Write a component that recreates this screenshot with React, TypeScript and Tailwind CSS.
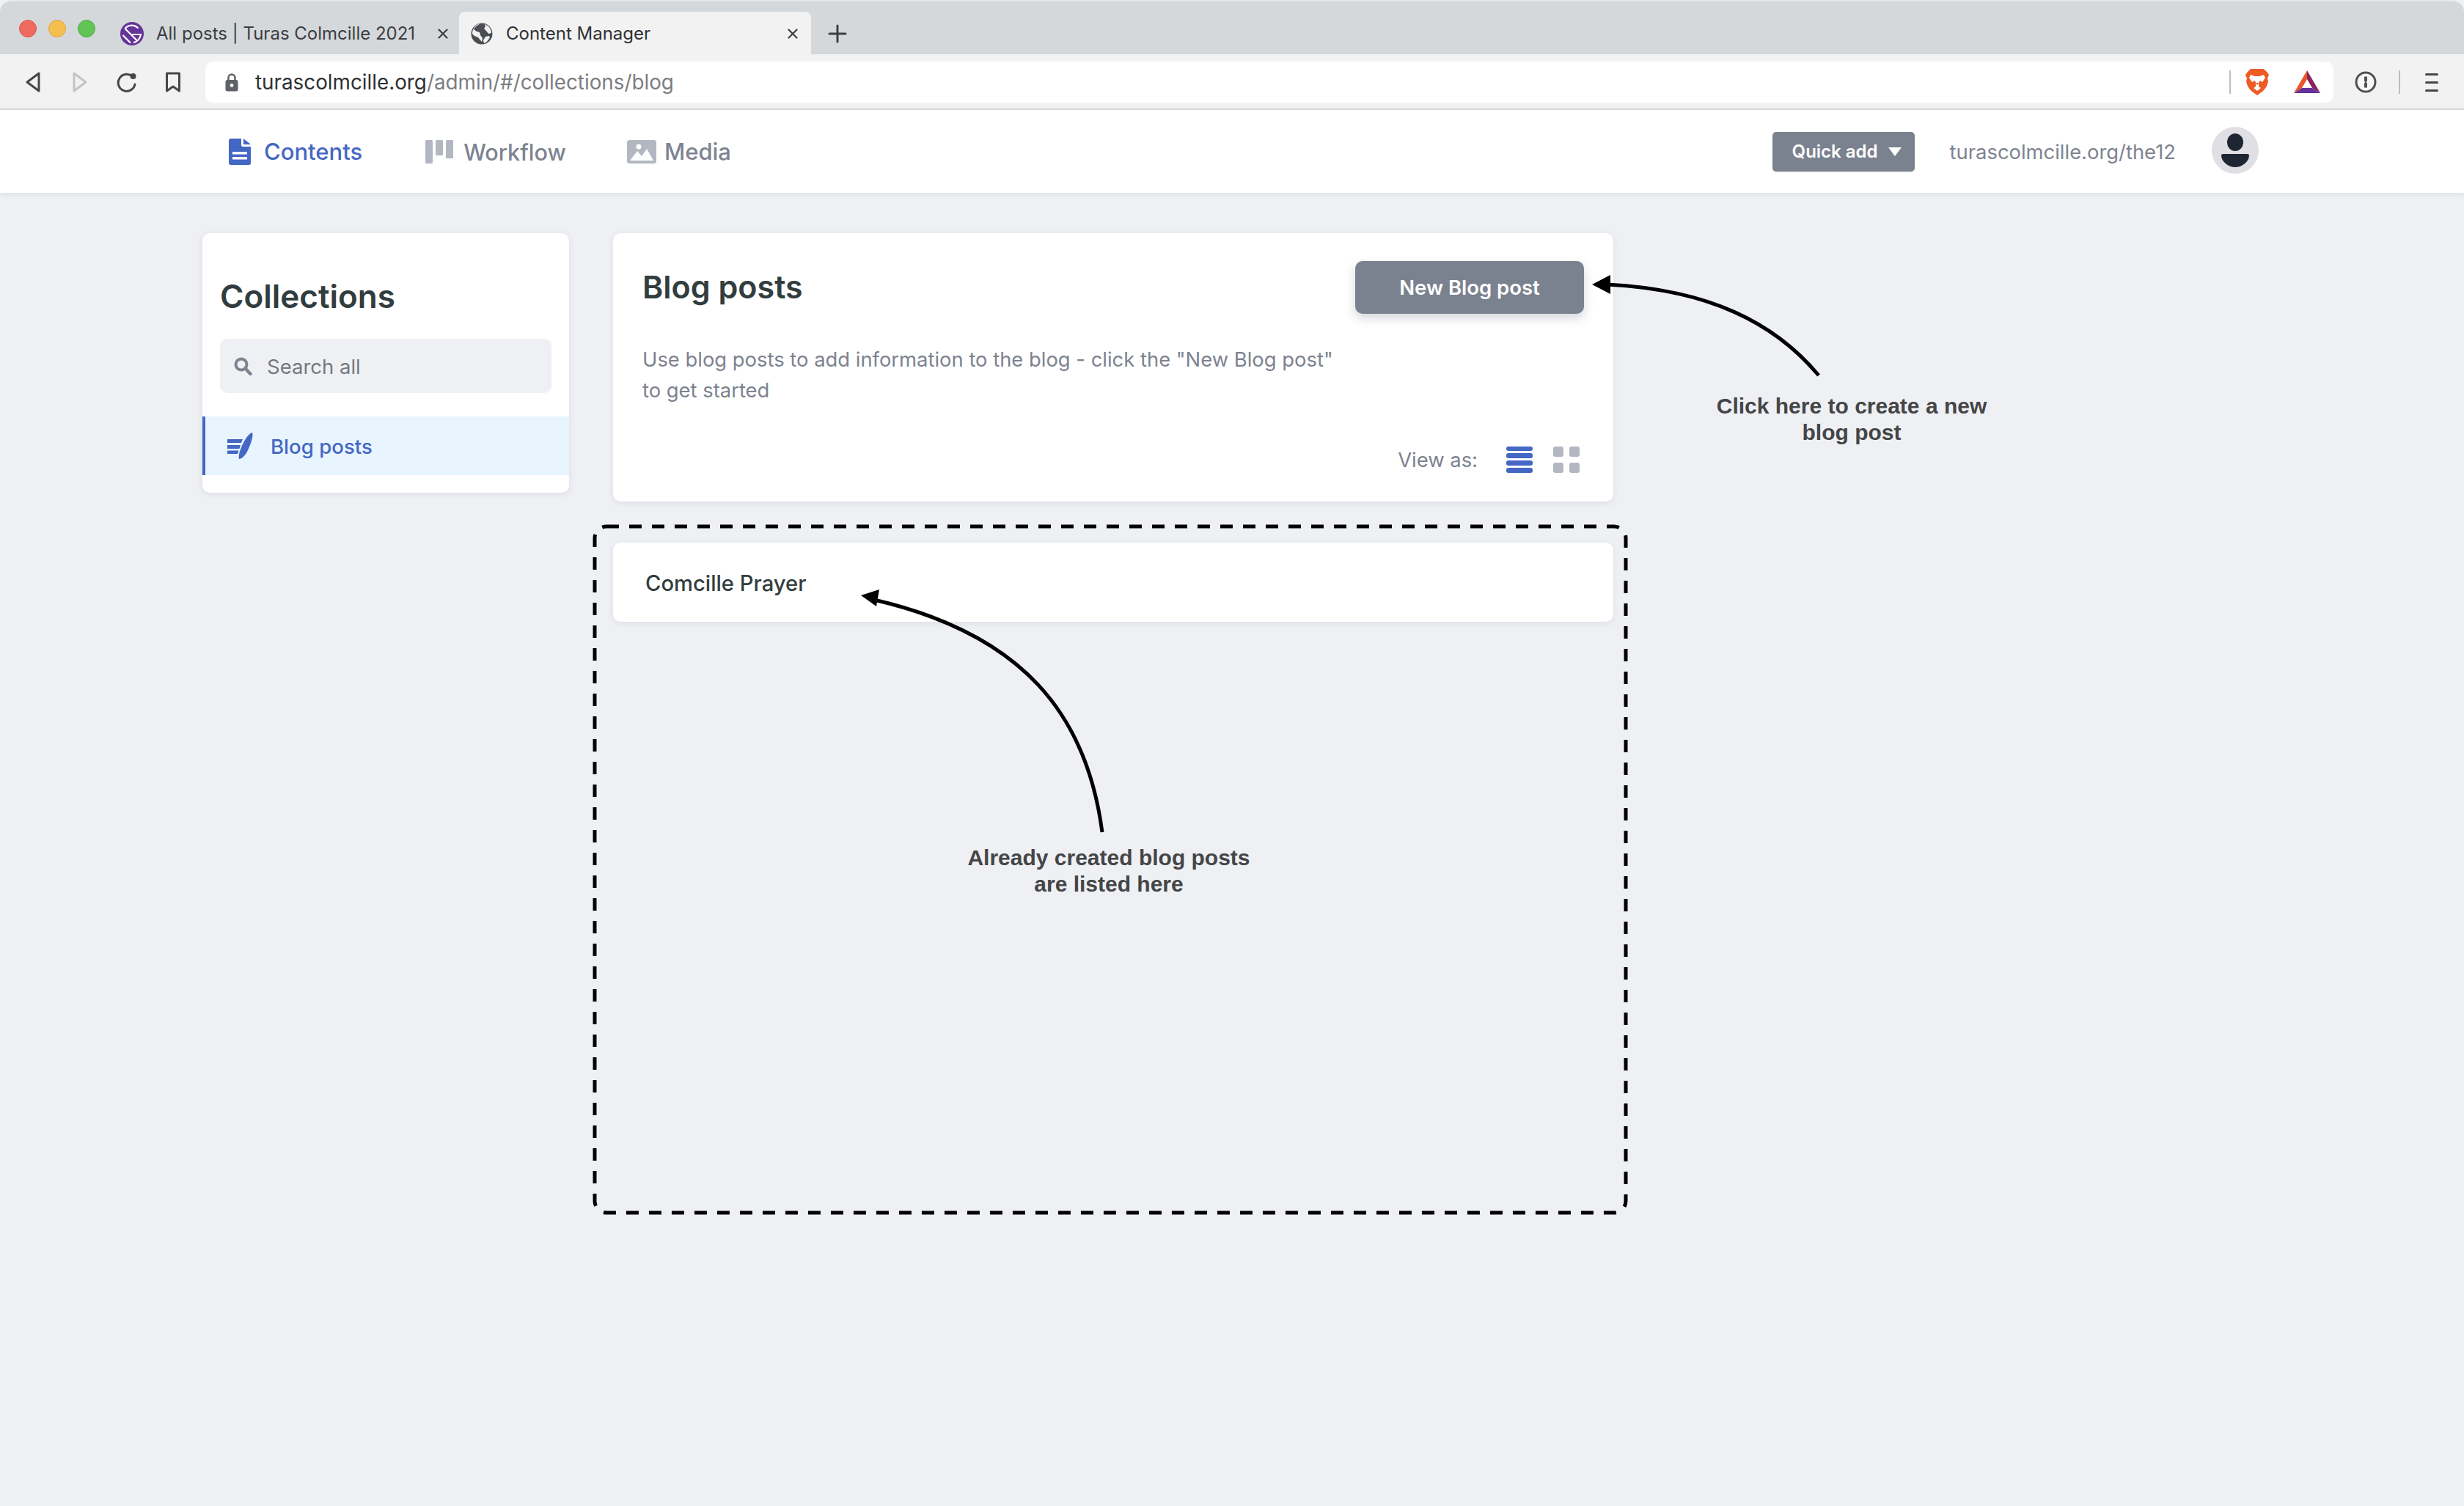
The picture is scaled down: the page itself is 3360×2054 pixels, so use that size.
import React from "react";

const Lights = () => (
  <div className="flex gap-[16px] mt-[25px] ml-[26px] w-[138px] shrink-0">
    <span className="w-[24px] h-[24px] rounded-full bg-[#ee6a5f] border border-[#d8564c]" />
    <span className="w-[24px] h-[24px] rounded-full bg-[#f5bf4f] border border-[#dca53c]" />
    <span className="w-[24px] h-[24px] rounded-full bg-[#61c454] border border-[#50ad44]" />
  </div>
);

const GatsbyIcon = () => (
  <svg width="32" height="32" viewBox="0 0 32 32" className="shrink-0">
    <circle cx="16" cy="16" r="16" fill="#663399" />
    <path d="M3.500 18 L14 28.500 M6.500 9 L23 25.500" stroke="#fff" strokeWidth="2.200" fill="none" />
    <path d="M6.500 9 C11 3.500 19 3 24.500 8.500 M16 17 H28 C27.500 22.500 23 27 18 28" stroke="#fff" strokeWidth="2.200" fill="none" />
  </svg>
);

const GlobeIcon = () => (
  <svg width="30" height="30" viewBox="0 0 30 30" className="shrink-0">
    <circle cx="15" cy="15" r="14.500" fill="#4a4d52" />
    <path d="M13 1 C9 4 5 6 4 9 L8 12 L12 13 L13 17 L16 21 L15 26 L10 20 L5 18 L2 15 C2 8 7 2 13 1Z M19 2 C24 4 28 8 28 14 L24 15 L21 11 L18 8 L20 5Z M20 19 L25 18 L26 20 C24 24 21 27 18 28 L17 24Z" fill="#f2f2f2" />
  </svg>
);

const CloseX = ({ className }: { className: string }) => (
  <svg width="14" height="14" viewBox="0 0 14 14" className={className}>
    <path d="M1.500 1.500 L12.500 12.500 M12.500 1.500 L1.500 12.500" stroke="#3c3f43" strokeWidth="2.200" strokeLinecap="round" />
  </svg>
);

const TabBar = () => (
  <div className="h-[74px] bg-[#d5d8db] rounded-t-[16px] border-t-2 border-[#e4e6e8] flex shrink-0 items-start">
    <Lights />
    <div className="flex items-center h-[56px] mt-[16px] w-[462px] shrink-0">
      <GatsbyIcon />
      <span className="ml-[17px] text-[24px] text-[#3b3d41] whitespace-nowrap">All posts | Turas Colmcille 2021</span>
      <CloseX className="ml-[31px] shrink-0" />
    </div>
    <div className="w-[480px] h-[58px] mt-[14px] bg-[#f2f2f2] rounded-t-[8px] flex items-center pl-[16px] pt-[2px] shrink-0 relative">
      <GlobeIcon />
      <span className="ml-[18px] text-[24px] text-[#2f3134] whitespace-nowrap">Content Manager</span>
      <CloseX className="absolute left-[448px] top-[23px]" />
    </div>
    <svg width="26" height="26" viewBox="0 0 26 26" className="ml-[23px] mt-[31px]">
      <path d="M13 2 V24 M2 13 H24" stroke="#3c3f43" strokeWidth="3" strokeLinecap="round" />
    </svg>
  </div>
);

const ToolIcons = () => (
  <div className="flex items-center w-[280px] shrink-0">
    <svg width="20" height="28" viewBox="0 0 20 28" className="ml-[35px]">
      <path d="M18 2 V26 L2 14 Z" fill="none" stroke="#44474b" strokeWidth="3" strokeLinejoin="round" />
    </svg>
    <svg width="20" height="28" viewBox="0 0 20 28" className="ml-[44px]">
      <path d="M2 2 V26 L18 14 Z" fill="none" stroke="#c4c4c4" strokeWidth="3" strokeLinejoin="round" />
    </svg>
    <svg width="28" height="28" viewBox="0 0 28 28" className="ml-[40px]">
      <path d="M21 6 A 11.500 11.500 0 1 0 25 17" fill="none" stroke="#44474b" strokeWidth="3" strokeLinecap="round" />
      <circle cx="22.500" cy="6" r="4" fill="#44474b" />
    </svg>
    <svg width="22" height="28" viewBox="0 0 22 28" className="ml-[38px]">
      <path d="M2.500 2 H19.500 V26 L11 20 L2.500 26 Z" fill="none" stroke="#44474b" strokeWidth="3" strokeLinejoin="round" />
    </svg>
  </div>
);

const BraveIcon = () => (
  <svg width="32" height="37" viewBox="0 0 32 37" className="ml-[20px] shrink-0">
    <path d="M7 0 H25 L29 4 L32 8 L30 13 L31 17 C30 22 28 26 24 30 L16 36 L8 30 C4 26 2 22 1 17 L2 13 L0 8 L3 4 Z" fill="#ef5b25" />
    <path d="M7 8 L13 10 H19 L25 8 L27 12 L23 18 L20 16 L18 18 V24 L21 26 L16 30 L11 26 L14 24 V18 L12 16 L9 18 L5 12 Z" fill="#fff" />
    <path d="M14 19 H18 L16 22 Z" fill="#ef5b25" />
  </svg>
);

const BatIcon = () => (
  <svg width="36" height="32" viewBox="0 0 36 32" className="ml-[34px] shrink-0">
    <path d="M18 0 L0 31 L11 24 L18 12 Z" fill="#e9572b" />
    <path d="M18 0 V12 L25 24 L36 31 Z" fill="#8a2460" />
    <path d="M0 31 H36 L25 24 H11 Z" fill="#66309a" />
  </svg>
);

const OnePassword = () => (
  <svg width="30" height="30" viewBox="0 0 30 30" className="ml-[29px] shrink-0">
    <circle cx="15" cy="15" r="13" fill="#f7f7f7" stroke="#4e5053" strokeWidth="3" />
    <path d="M13 7.500 H17 V13.500 L15.600 15 L17 16.500 V22.500 H13 V16.500 L14.400 15 L13 13.500 Z" fill="#4e5053" />
  </svg>
);

const Toolbar = () => (
  <div className="h-[76px] bg-[#f2f2f2] border-b-2 border-[#d9d9d9] flex items-start pt-[10px] shrink-0">
    <div className="h-[56px] flex items-center"><ToolIcons /></div>
    <div className="h-[56px] w-[2902px] bg-white rounded-[10px] flex items-center shrink-0">
      <svg width="18" height="26" viewBox="0 0 18 26" className="ml-[27px] shrink-0">
        <path d="M4.500 11 V7 A4.500 4.500 0 0 1 13.500 7 V11" fill="none" stroke="#5e6165" strokeWidth="2.500" />
        <rect x="0.500" y="10" width="17" height="15.500" rx="2.500" fill="#5e6165" />
        <circle cx="9" cy="17.500" r="2.400" fill="#fff" />
      </svg>
      <span className="ml-[23px] pt-[2px] text-[27.8px] text-[#2f3134] whitespace-nowrap">
        turascolmcille.org<span className="text-[#7b7e83]">/admin/#/collections/blog</span>
      </span>
      <div className="ml-auto w-[2px] h-[32px] bg-[#bdbdbd] shrink-0" />
      <BraveIcon />
      <BatIcon />
      <div className="w-[18px] shrink-0" />
    </div>
    <div className="h-[56px] flex items-center">
      <OnePassword />
      <div className="ml-[30px] w-[2px] h-[32px] bg-[#bdbdbd]" />
      <div className="ml-[34px] w-[18px] flex flex-col gap-[8px]">
        <span className="h-[3px] rounded-full bg-[#44474b]" />
        <span className="h-[3px] rounded-full bg-[#44474b]" />
        <span className="h-[3px] rounded-full bg-[#44474b]" />
      </div>
    </div>
  </div>
);

const NavBar = () => (
  <div className="h-[113px] bg-white shadow-[0_2px_6px_rgba(60,70,90,0.10)] flex items-center pl-[312px] shrink-0 relative">
    <svg width="30" height="36" viewBox="0 0 30 36" className="shrink-0">
      <path d="M3 0 H17 V9 A2 2 0 0 0 19 11 H30 V33 A3 3 0 0 1 27 36 H3 A3 3 0 0 1 0 33 V3 A3 3 0 0 1 3 0Z" fill="#4467c4" />
      <path d="M20 0 L30 8 H20 Z" fill="#4467c4" />
      <rect x="5" y="18" width="20" height="3.500" fill="#fff" />
      <rect x="5" y="25" width="20" height="3.500" fill="#fff" />
    </svg>
    <span className="ml-[18px] pt-[2px] text-[31px] font-medium text-[#4467c4]">Contents</span>
    <svg width="38" height="32" viewBox="0 0 38 32" className="ml-[86px] shrink-0">
      <rect x="0" y="0" width="10" height="32" rx="1.500" fill="#b3b7c2" />
      <rect x="14" y="0" width="10" height="21" rx="1.500" fill="#b3b7c2" />
      <rect x="28" y="0" width="10" height="25" rx="1.500" fill="#b3b7c2" />
    </svg>
    <span className="ml-[14px] pt-[2px] text-[30.6px] font-medium text-[#7e8390]">Workflow</span>
    <svg width="40" height="32" viewBox="0 0 40 32" className="ml-[83px] shrink-0">
      <rect x="0" y="0" width="40" height="32" rx="3.500" fill="#b3b7c2" />
      <circle cx="16" cy="9" r="3.500" fill="#fff" />
      <path d="M4 28 L14 15 L20 22 L27 12 L36 28 Z" fill="#fff" />
    </svg>
    <span className="ml-[11px] pt-[2px] text-[31px] font-medium text-[#7e8390]">Media</span>
    <div className="ml-auto flex items-center mr-[280px]">
      <div className="h-[54px] w-[194px] bg-[#7b828f] rounded-[5px] flex items-center pl-[27px] shadow-[0_1px_2px_rgba(0,0,0,0.08)]">
        <span className="text-[24px] font-semibold text-white whitespace-nowrap">Quick add</span>
        <svg width="18" height="12" viewBox="0 0 18 12" className="ml-[14px]">
          <path d="M0 0 H18 L9 12 Z" fill="#fff" />
        </svg>
      </div>
      <span className="ml-[48px] pt-[3px] text-[27.4px] text-[#7e8390] whitespace-nowrap">turascolmcille.org/the12</span>
      <div className="ml-[49px] -mt-[4px] w-[64px] h-[64px] rounded-full bg-[#dfdfe4] flex items-center justify-center">
        <svg width="40" height="46" viewBox="0 0 40 46">
          <ellipse cx="20" cy="12" rx="11" ry="12" fill="#1f2633" />
          <path d="M1 30 C1 28 3 28 6 28 H34 C37 28 39 28 39 30 C39 38 30 46 20 46 C10 46 1 38 1 30Z" fill="#1f2633" />
        </svg>
      </div>
    </div>
  </div>
);

const Sidebar = () => (
  <div className="w-[500px] h-[354px] bg-white rounded-[10px] shadow-[0_2px_8px_rgba(60,70,90,0.10)] shrink-0 overflow-hidden">
    <h2 className="ml-[24px] mt-[56px] text-[44px] leading-[60px] font-semibold text-[#313d3e]">Collections</h2>
    <div className="mx-[24px] mt-[28px] h-[74px] rounded-[10px] bg-[#eff0f4] flex items-center pl-[18px]">
      <svg width="26" height="26" viewBox="0 0 26 26" className="shrink-0">
        <circle cx="11" cy="11" r="7.500" fill="none" stroke="#7e8390" strokeWidth="4" />
        <path d="M16.500 16.500 L23.500 24" stroke="#7e8390" strokeWidth="4.500" strokeLinecap="round" />
      </svg>
      <span className="ml-[20px] pt-[3px] text-[27.5px] text-[#75797f]">Search all</span>
    </div>
    <div className="mt-[32px] h-[80px] bg-[#e8f4fe] border-l-4 border-[#4467c4] flex items-center pl-[30px]">
      <svg width="36" height="36" viewBox="0 0 36 36" className="shrink-0">
        <path d="M0 9 H21 L19 14 H0Z M0 17 H18 L16.500 22 H0Z M0 24.500 H15.500 L14 29 H0Z" fill="#4467c4" />
        <path d="M34 0 C36 4 32 16 27 26 C24 32 19 36 16 36 C14 30 20 16 26 7 C29 3 32 0 34 0Z" fill="#4467c4" />
      </svg>
      <span className="ml-[23px] pt-[4px] text-[27.6px] font-medium text-[#4467c4]">Blog posts</span>
    </div>
  </div>
);

const ListIcon = () => (
  <div className="w-[36px] flex flex-col gap-[3.300px]">
    <span className="h-[6.500px] rounded-[3px] bg-[#4467c4]" />
    <span className="h-[6.500px] rounded-[3px] bg-[#4467c4]" />
    <span className="h-[6.500px] rounded-[3px] bg-[#4467c4]" />
    <span className="h-[6.500px] rounded-[3px] bg-[#4467c4]" />
  </div>
);

const GridIcon = () => (
  <div className="w-[36px] grid grid-cols-2 gap-x-[8px] gap-y-[8px]">
    <span className="h-[14px] rounded-[3px] bg-[#b3b7c2]" />
    <span className="h-[14px] rounded-[3px] bg-[#b3b7c2]" />
    <span className="h-[14px] rounded-[3px] bg-[#b3b7c2]" />
    <span className="h-[14px] rounded-[3px] bg-[#b3b7c2]" />
  </div>
);

const MainColumn = () => (
  <div className="w-[1364px] ml-[60px] shrink-0 flex flex-col gap-[56px]">
    <div className="h-[366px] bg-white rounded-[10px] shadow-[0_2px_8px_rgba(60,70,90,0.10)] pl-[40px] pr-[40px] pt-[38px] flex flex-col">
      <div className="flex items-start justify-between h-[72px]">
        <h1 className="text-[43px] leading-[70px] font-semibold text-[#313d3e]">Blog posts</h1>
        <div className="w-[312px] h-[72px] rounded-[10px] bg-[#7b828f] flex items-center justify-center pt-[2px] text-[27.5px] font-semibold text-white shadow-[0_6px_14px_rgba(60,70,90,0.22)]">
          New Blog post
        </div>
      </div>
      <p className="mt-[41px] w-[960px] text-[27.4px] leading-[42px] text-[#7d8290]">
        Use blog posts to add information to the blog - click the "New Blog post" to get started
      </p>
      <div className="mt-[52px] flex items-center justify-end pr-[6px]">
        <span className="text-[27.4px] text-[#7d8290] mr-[39px] pt-[2px]">View as:</span>
        <ListIcon />
        <div className="ml-[28px]"><GridIcon /></div>
      </div>
    </div>
    <div className="h-[108px] bg-white rounded-[10px] shadow-[0_2px_8px_rgba(60,70,90,0.10)] flex items-center pl-[44px]">
      <span className="text-[29.2px] font-medium text-[#313d3e] pt-[4px]">Comcille Prayer</span>
    </div>
  </div>
);

const Annotations = () => (
  <>
    <svg width="3360" height="2054" viewBox="0 0 3360 2054" className="absolute left-0 top-0 pointer-events-none">
      <rect x="811" y="718" width="1406" height="936" rx="16" fill="none" stroke="#000" strokeWidth="5" strokeDasharray="17 14" />
      <path d="M2480 512 C2420 440 2330 395 2192 388" fill="none" stroke="#000" strokeWidth="5" />
      <path d="M2171 388 L2196 375 L2196 401 Z" fill="#000" />
      <path d="M1503 1135 C1482 975 1395 865 1192 818" fill="none" stroke="#000" strokeWidth="5" />
      <path d="M1174 812 L1199 804 L1195 827 Z" fill="#000" />
    </svg>
    <div className="absolute left-[2280px] top-[536px] w-[490px] text-center [font-family:'Liberation_Sans',Arial,sans-serif] font-bold text-[30px] leading-[36px] text-[#444547]">
      Click here to create a new
      <br />
      blog post
    </div>
    <div className="absolute left-[1262px] top-[1152px] w-[500px] text-center [font-family:'Liberation_Sans',Arial,sans-serif] font-bold text-[30px] leading-[36px] text-[#444547]">
      Already created blog posts
      <br />
      are listed here
    </div>
  </>
);

export default function App() {
  return (
    <div className="relative w-[3360px] h-[2054px] overflow-hidden bg-[#eff0f4] [font-family:Inter,sans-serif] flex flex-col">
      <TabBar />
      <Toolbar />
      <NavBar />
      <div className="flex pl-[276px] pt-[55px]">
        <Sidebar />
        <MainColumn />
      </div>
      <Annotations />
    </div>
  );
}
